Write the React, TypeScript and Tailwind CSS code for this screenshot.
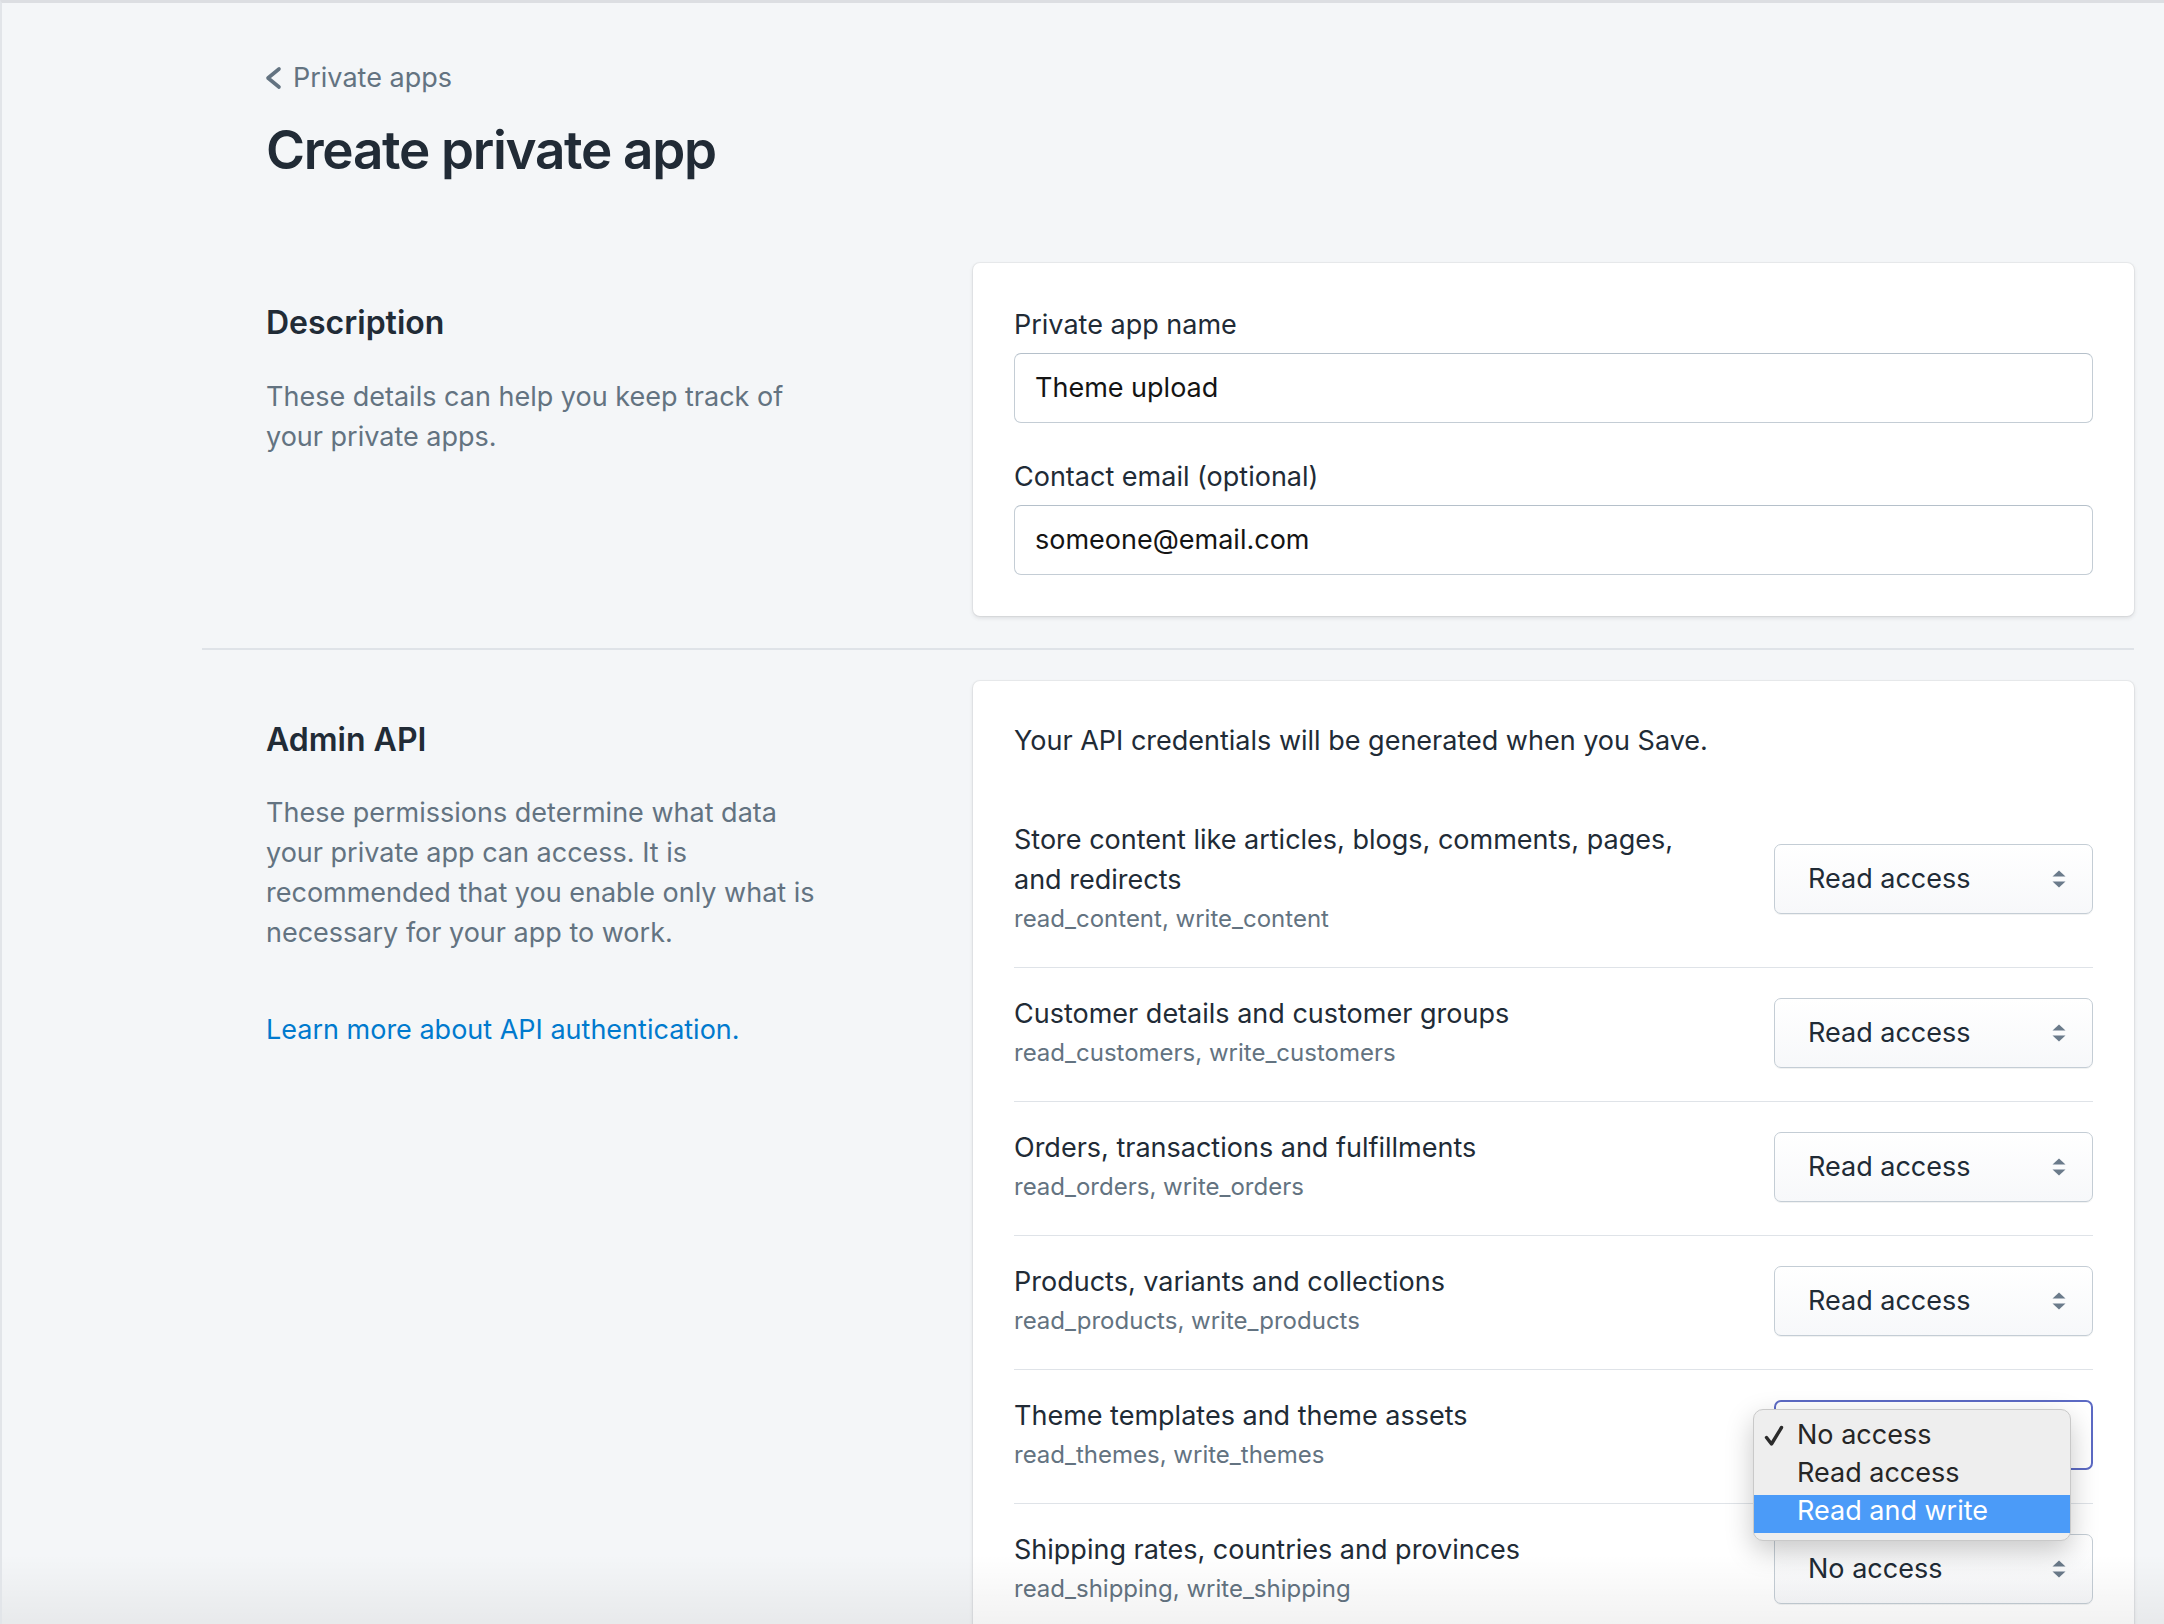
import React from "react";

const rows = [
  {
    title: "Store content like articles, blogs, comments, pages, and redirects",
    scope: "read_content, write_content",
    value: "Read access",
  },
  {
    title: "Customer details and customer groups",
    scope: "read_customers, write_customers",
    value: "Read access",
  },
  {
    title: "Orders, transactions and fulfillments",
    scope: "read_orders, write_orders",
    value: "Read access",
  },
  {
    title: "Products, variants and collections",
    scope: "read_products, write_products",
    value: "Read access",
  },
  {
    title: "Theme templates and theme assets",
    scope: "read_themes, write_themes",
    value: "",
    open: true,
  },
  {
    title: "Shipping rates, countries and provinces",
    scope: "read_shipping, write_shipping",
    value: "No access",
  },
];

function Arrows() {
  return (
    <svg width="14" height="18" viewBox="0 0 14 18" className="shrink-0">
      <path d="M0.5 6.5 L7 0.5 L13.5 6.5 Z" fill="#6b7b8b" />
      <path d="M0.5 11.5 L13.5 11.5 L7 17.5 Z" fill="#6b7b8b" />
    </svg>
  );
}

function Select({ value, open }: { value: string; open?: boolean }) {
  return (
    <div className="relative shrink-0">
      <div
        className={
          open
            ? "flex h-[70px] w-[319px] items-center justify-between rounded-[7px] border-2 border-[#5c6ac4] bg-white pl-[32px] pr-[25px]"
            : "flex h-[70px] w-[319px] items-center justify-between rounded-[7px] border border-[#c4cdd5] bg-gradient-to-b from-white to-[#f7f8fa] pl-[33px] pr-[26px] shadow-[0_1px_0_rgba(22,29,37,0.06)]"
        }
      >
        <span className="text-[27px] leading-[40px] text-[#212b36]">{value}</span>
        <Arrows />
      </div>
      {open && (
        <div className="absolute left-[-21px] top-[9px] z-10 w-[318px] rounded-[10px] border border-[#c9c9c9] bg-[#eeeeee] pb-[7px] pt-[9px] shadow-[0_10px_28px_rgba(0,0,0,0.22)]">
          <div className="relative h-[38px] pl-[43px] text-[27px] leading-[32px] text-[#262626]">
            <svg
              width="20"
              height="22"
              viewBox="0 0 20 22"
              className="absolute left-[10px] top-[6px]"
            >
              <path
                d="M2.5 12.5 L7.5 19 L17.5 2.5"
                fill="none"
                stroke="#2b2b2b"
                strokeWidth="3.4"
                strokeLinecap="round"
                strokeLinejoin="round"
              />
            </svg>
            No access
          </div>
          <div className="h-[38px] pl-[43px] text-[27px] leading-[32px] text-[#262626]">
            Read access
          </div>
          <div className="h-[38px] bg-[#4b9bf8] pl-[43px] text-[27px] leading-[32px] text-white">
            Read and write
          </div>
        </div>
      )}
    </div>
  );
}

export default function App() {
  return (
    <div className="relative h-[1624px] w-[2164px] overflow-hidden border-l-2 border-t-[3px] border-l-[#e2e5e9] border-t-[#dcdee2] bg-[#f4f6f8] font-['Inter','Liberation_Sans',sans-serif] text-[#212b36]">
      <div className="ml-[200px] w-[1932px]">
        {/* Header */}
        <div className="pl-[62px] pt-[55px]">
          <div className="flex items-center gap-[10px] text-[27px] leading-[40px] text-[#637381]">
            <svg width="19" height="24" viewBox="0 0 19 24">
              <path
                d="M15 3 L4 12 L15 21"
                fill="none"
                stroke="#637381"
                strokeWidth="3.6"
                strokeLinecap="round"
                strokeLinejoin="round"
              />
            </svg>
            <span>Private apps</span>
          </div>
          <h1 className="ml-[2px] mt-[20px] text-[53px] font-semibold leading-[64px] tracking-[-1.3px] text-[#212b36]">
            Create private app
          </h1>
        </div>

        {/* Description section */}
        <section className="mt-[81px] flex">
          <div className="w-[771px] shrink-0 pl-[64px] pt-[40px]">
            <h2 className="text-[32px] font-semibold leading-[40px] text-[#212b36]">
              Description
            </h2>
            <p className="mt-[34px] max-w-[560px] text-[27px] leading-[40px] text-[#637381]">
              These details can help you keep track of your private apps.
            </p>
          </div>
          <div className="flex-1 rounded-[7px] bg-white px-[41px] pb-[41px] pt-[42px] shadow-[0_0_0_1px_rgba(63,63,68,0.06),0_2px_4px_rgba(63,63,68,0.14)]">
            <label className="block text-[27px] leading-[40px] text-[#212b36]">
              Private app name
            </label>
            <div className="mt-[8px] flex h-[70px] items-center rounded-[7px] border border-[#c4cdd5] border-t-[#b5c0ca] bg-white pl-[20px] text-[27px] text-[#141414]">
              Theme upload
            </div>
            <label className="mt-[34px] block text-[27px] leading-[40px] text-[#212b36]">
              Contact email (optional)
            </label>
            <div className="mt-[8px] flex h-[70px] items-center rounded-[7px] border border-[#c4cdd5] border-t-[#b5c0ca] bg-white pl-[20px] text-[27px] text-[#141414]">
              someone@email.com
            </div>
          </div>
        </section>

        <div className="mt-[32px] h-[2px] bg-[#dfe3e8]" />

        {/* Admin API section */}
        <section className="mt-[31px] flex">
          <div className="w-[771px] shrink-0 pl-[64px] pt-[39px]">
            <h2 className="text-[32px] font-semibold leading-[40px] text-[#212b36]">
              Admin API
            </h2>
            <p className="mt-[33px] max-w-[560px] text-[27px] leading-[40px] text-[#637381]">
              These permissions determine what data your private app can access. It is recommended
              that you enable only what is necessary for your app to work.
            </p>
            <p className="mt-[57px] text-[27px] leading-[40px] text-[#007ace]">
              Learn more about API authentication.
            </p>
          </div>
          <div className="flex-1 rounded-t-[7px] bg-white px-[41px] pt-[40px] shadow-[0_0_0_1px_rgba(63,63,68,0.06),0_2px_4px_rgba(63,63,68,0.14)]">
            <p className="text-[27px] leading-[40px] text-[#212b36]">
              Your API credentials will be generated when you Save.
            </p>
            <div className="mt-[33px]">
              {rows.map((r, i) => (
                <div
                  key={i}
                  className={
                    "flex items-center justify-between gap-[40px] pb-[29px] pt-[26px]" +
                    (i < rows.length - 1 ? " border-b border-[#dfe3e8]" : "")
                  }
                >
                  <div className="max-w-[700px]">
                    <div className="text-[27px] leading-[40px] text-[#212b36]">{r.title}</div>
                    <div className="text-[24px] leading-[38px] text-[#637381]">{r.scope}</div>
                  </div>
                  <Select value={r.value} open={r.open} />
                </div>
              ))}
            </div>
          </div>
        </section>
      </div>
      <div className="pointer-events-none absolute bottom-0 left-0 right-0 h-[70px] bg-gradient-to-b from-transparent to-[rgba(0,0,0,0.05)]" />
    </div>
  );
}
